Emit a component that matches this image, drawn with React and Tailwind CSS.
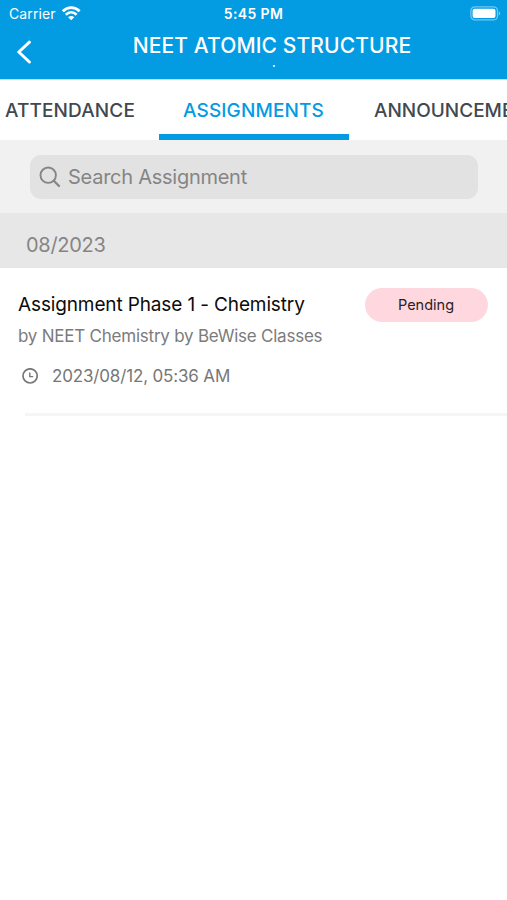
function StatusBar() {
  return (
    <div className="grid h-[27px] grid-cols-3 items-center pl-[9px] pr-[6px] text-white">
      <div className="flex items-center gap-[6px]">
        <span className="text-[14px] leading-[27px] tracking-[0.1px]">Carrier</span>
        <svg width="19" height="15" viewBox="0 0 19 15" fill="none" stroke="currentColor">
          <path d="M0.8 5.2C5.6 0.4 12.8 0.4 17.6 5.2" strokeWidth="2.9" />
          <path d="M3.8 8.7C7 5.6 11.4 5.6 14.6 8.7" strokeWidth="2.6" />
          <path d="M9.2 14.3L6.1 11.2C7.8 9.6 10.6 9.6 12.3 11.2Z" fill="currentColor" stroke="none" />
        </svg>
      </div>
      <span className="-ml-[3px] whitespace-nowrap text-center text-[14px] font-semibold leading-[27px] tracking-[0.35px]">5:45 PM</span>
      <svg className="justify-self-end" width="31" height="15" viewBox="0 0 31 15">
        <rect x="0.9" y="0.9" width="26.6" height="13" rx="4" fill="none" stroke="#fff" strokeOpacity="0.45" strokeWidth="1.3" />
        <rect x="2.6" y="2.7" width="22.9" height="9.4" rx="2" fill="#fff" />
        <path d="M28.8 5.2C30.6 5.9 30.6 8.9 28.8 9.6Z" fill="#fff" fillOpacity="0.5" />
      </svg>
    </div>
  );
}

function TitleBar() {
  return (
    <div className="flex h-[52px] items-start">
      <svg className="ml-[16px] mt-[13px] shrink-0" width="16" height="24" viewBox="0 0 16 24" fill="none" stroke="#fff" strokeWidth="3" strokeLinecap="round" strokeLinejoin="round">
        <path d="M13.4 2.2L2.8 12L13.4 22" />
      </svg>
      <div className="ml-[100px] flex w-[280px] flex-col items-center text-white">
        <h1 className="h-[37px] whitespace-nowrap text-[21px] font-medium leading-[38px] tracking-[0.12px]">NEET ATOMIC STRUCTURE</h1>
        <span className="ml-[3px] mt-[1px] size-[2px] rounded-full bg-white" />
      </div>
    </div>
  );
}

function Tabs() {
  return (
    <nav className="flex h-[61px] overflow-hidden border-t border-[#b5e4f9] bg-white text-[19px] font-medium leading-[61px] tracking-[0.13px] text-[#41484f]">
      <span className="w-[159px] shrink-0 whitespace-nowrap pl-[5px]">ATTENDANCE</span>
      <span className="w-[190px] shrink-0 whitespace-nowrap border-b-[6px] border-[#039be2] pl-[24px] text-[#039be2]">ASSIGNMENTS</span>
      <span className="shrink-0 whitespace-nowrap pl-[25px] tracking-normal">ANNOUNCEMENTS</span>
    </nav>
  );
}

function Assignment() {
  return (
    <article className="bg-white pl-[18px] pr-[19px] pt-[20px]">
      <div className="flex h-[34px] items-start justify-between">
        <h2 className="whitespace-nowrap text-[19px] leading-[34px] tracking-[-0.13px] text-[#0c0c0c]">Assignment Phase 1 - Chemistry</h2>
        <span className="h-[34px] w-[123px] rounded-full bg-[#ffd8df] pr-px text-center text-[14.5px] leading-[34px] text-[#2b2024]">Pending</span>
      </div>
      <p className="whitespace-nowrap text-[17px] leading-[28px] tracking-[-0.23px] text-[#7c7c7c]">by NEET Chemistry by BeWise Classes</p>
      <div className="mt-[12px] flex h-[28px] items-center text-[#777]">
        <svg className="ml-[4px] mr-[13px]" width="17" height="17" viewBox="0 0 17 17" fill="none" stroke="currentColor" strokeWidth="1.7">
          <circle cx="8.1" cy="7.9" r="7.1" />
          <path d="M7.8 4.5V8.6H11.2" strokeWidth="1.4" />
        </svg>
        <span className="whitespace-nowrap text-[17px] leading-[28px] tracking-[-0.16px]">2023/08/12, 05:36 AM</span>
      </div>
      <div className="-mr-[19px] ml-[7px] mt-[23px] h-[3px] bg-[#f5f5f5]" />
    </article>
  );
}

export default function App() {
  return (
    <main className="h-[900px] w-[507px] overflow-hidden bg-white font-['Inter',sans-serif]">
      <header className="bg-[#039be2]">
        <StatusBar />
        <TitleBar />
      </header>
      <Tabs />
      <div className="h-[73px] bg-[#f1f1f1] pl-[30px] pt-[15px]">
        <div className="flex h-[44px] w-[448px] items-center rounded-[11px] bg-[#e2e2e2] pl-[9px] text-[#858585]">
          <svg width="22" height="22" viewBox="0 0 22 22" fill="none" stroke="currentColor" strokeWidth="1.9" strokeLinecap="round">
            <circle cx="9.2" cy="9.2" r="7.7" />
            <path d="M14.8 14.8L20 20" strokeWidth="2.3" />
          </svg>
          <span className="ml-[7px] whitespace-nowrap text-[20px] leading-[46px] tracking-[-0.26px]">Search Assignment</span>
        </div>
      </div>
      <div className="h-[55px] bg-[#e7e7e7] pl-[26px] text-[20px] leading-[64px] tracking-[-0.28px] text-[#858585]">08/2023</div>
      <Assignment />
    </main>
  );
}
